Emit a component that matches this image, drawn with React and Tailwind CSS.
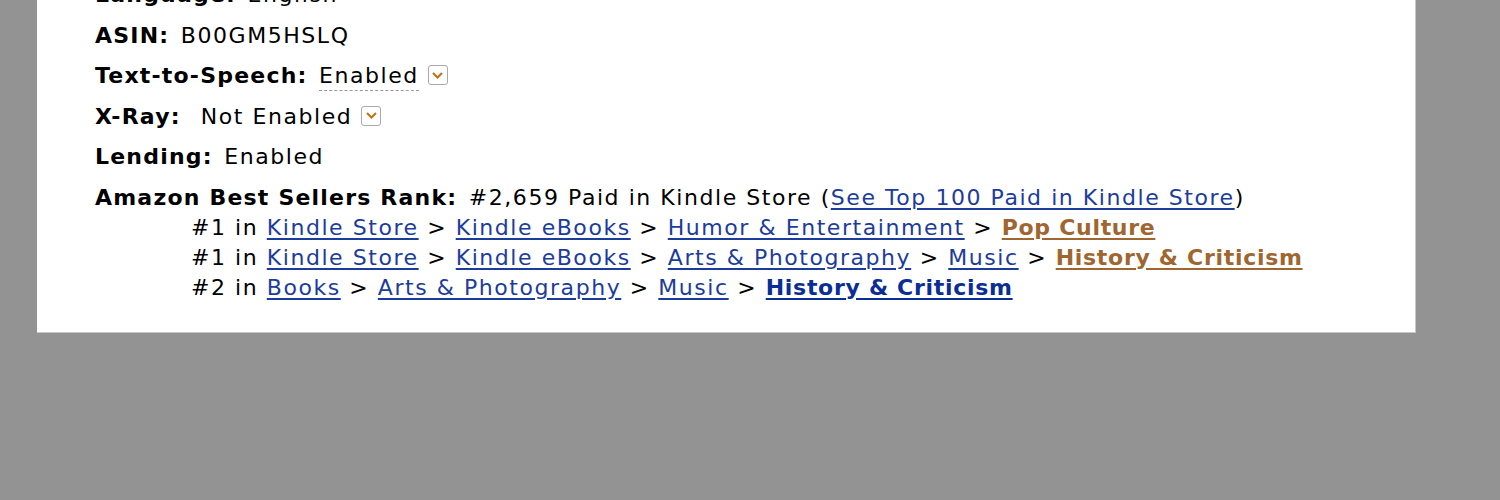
import React from "react";

const Drop = () => (
  <span className="inline-flex items-center justify-center w-[20px] h-[20px] border border-[#a9a9a9] rounded-[3px] bg-white align-middle ml-[9px] relative -top-[2px]">
    <svg width="11" height="7" viewBox="0 0 11 7">
      <path d="M1 1 L5.5 5.5 L10 1" fill="none" stroke="#c0730f" strokeWidth="2" />
    </svg>
  </span>
);

const L = ({ children }) => (
  <a className="text-[#1c3c9c] underline decoration-[1.5px] underline-offset-[3px]">{children}</a>
);
const B = ({ children }) => <b className="tracking-[1.2px] mr-[3px]">{children}</b>;
const Sep = () => <span> &gt; </span>;

export default function App() {
  return (
    <div className="w-[1500px] h-[500px] overflow-hidden bg-[#939393]" style={{ fontFamily: '"DejaVu Sans", Verdana, sans-serif' }}>
      <div className="ml-[37px] w-[1379px] bg-white border-b border-r border-[#c8c8c8] -mt-[20px] pl-[58px] pb-[29px] text-[22px] text-black leading-[30px] tracking-[1.55px]">
        <ul className="flex flex-col gap-[10.5px]">
          <li><B>Language:</B> English</li>
          <li><B>ASIN:</B> B00GM5HSLQ</li>
          <li><B>Text-to-Speech:</B> <span className="border-b border-dashed border-[#999] pb-[2px]">Enabled</span><Drop /></li>
          <li><B>X-Ray:</B>&nbsp; Not Enabled<Drop /></li>
          <li><B>Lending:</B> Enabled</li>
          <li>
            <B>Amazon Best Sellers Rank:</B> #2,659 Paid in Kindle Store (<L>See Top 100 Paid in Kindle Store</L>)
            <div className="pl-[96px]">
              <div>#1 in <L>Kindle Store</L><Sep /><L>Kindle eBooks</L><Sep /><L>Humor &amp; Entertainment</L><Sep /><a className="font-bold tracking-[0.7px] text-[#a0662f] underline decoration-[1.5px] underline-offset-[3px]">Pop Culture</a></div>
              <div>#1 in <L>Kindle Store</L><Sep /><L>Kindle eBooks</L><Sep /><L>Arts &amp; Photography</L><Sep /><L>Music</L><Sep /><a className="font-bold tracking-[0.7px] text-[#a0662f] underline decoration-[1.5px] underline-offset-[3px]">History &amp; Criticism</a></div>
              <div>#2 in <L>Books</L><Sep /><L>Arts &amp; Photography</L><Sep /><L>Music</L><Sep /><a className="font-bold tracking-[0.7px] text-[#0a2d96] underline decoration-[1.5px] underline-offset-[3px]">History &amp; Criticism</a></div>
            </div>
          </li>
        </ul>
      </div>
    </div>
  );
}
